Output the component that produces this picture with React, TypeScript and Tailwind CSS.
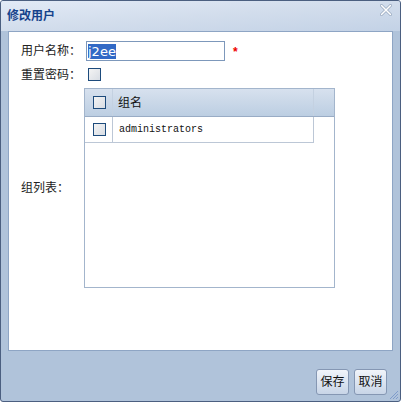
import React from "react";

const cjk = { fontFamily: '"Liberation Sans", "Noto Sans CJK SC", sans-serif' };

function Check() {
  return (
    <div className="w-[13px] h-[13px] border border-[#1d4b7c] bg-gradient-to-br from-[#f4f4f4] to-[#d8dde4]" />
  );
}

export default function App() {
  return (
    <div className="w-[401px] h-[402px] bg-white" style={cjk}>
      <div className="w-[401px] h-[402px] flex flex-col border border-[#4b5f80] rounded-[3px] bg-[#b0c3da] overflow-hidden">
        {/* title bar */}
        <div className="h-[30px] flex items-center justify-between pl-[6px] pr-[8px] bg-gradient-to-br from-[#e2eaf6] via-[#d2ddec] to-[#c3d2e6] shrink-0">
          <span className="text-[12px] font-bold text-[#15428b] leading-none -mt-[1px]">修改用户</span>
          <svg width="12" height="12" viewBox="0 0 12 12" className="-mt-[12px]">
            <path d="M1.5 1.5 L10.5 10.5 M10.5 1.5 L1.5 10.5" stroke="#9aaac0" strokeWidth="3" strokeLinecap="round" />
            <path d="M1.5 1.5 L10.5 10.5 M10.5 1.5 L1.5 10.5" stroke="#ffffff" strokeWidth="1.5" strokeLinecap="round" />
          </svg>
        </div>
        {/* body */}
        <div className="flex-1 flex flex-col pl-[7px] pr-[7px]">
          <div className="h-[320px] bg-white border border-[#8ea5c4] pl-[12px] pt-[9px] text-[12px] text-[#222]">
            <div className="flex items-center h-[20px]">
              <span className="w-[65px]">用户名称：</span>
              <div className="w-[139px] h-[20px] border border-[#7d98bb] flex items-center pl-[1px]">
                <span className="bg-[#3169c6] text-white text-[13px] leading-[15px]" style={{ fontFamily: '"DejaVu Sans", Verdana, sans-serif' }}>j2ee</span>
              </div>
              <span className="ml-[8px] text-[#ee0000] text-[12px] font-bold leading-none mt-[2px]">*</span>
            </div>
            <div className="flex items-center h-[13px] mt-[7px]">
              <span className="w-[67px]">重置密码：</span>
              <Check />
            </div>
            <div className="flex items-center mt-[7px]">
              <span className="w-[63px]">组列表：</span>
              <div className="w-[251px] h-[200px] border border-[#a3b5cc] flex flex-col">
                <div className="h-[28px] flex border-b border-[#99acc5] bg-gradient-to-b from-[#d7e1ee] to-[#bccee2] shrink-0">
                  <div className="w-[28px] flex items-center justify-center border-r border-[#c4d1e1] pl-[1px]">
                    <Check />
                  </div>
                  <div className="w-[201px] flex items-center pl-[5px] border-r border-[#c4d1e1] text-[12px] text-[#111]">组名</div>
                  <div className="flex-1" />
                </div>
                <div className="h-[26px] w-[229px] flex border-b border-r border-[#bcc7d6]">
                  <div className="w-[28px] flex items-center justify-center border-r border-[#bcc7d6] pl-[1px]">
                    <Check />
                  </div>
                  <div className="flex-1 flex items-center pl-[6px] text-[10px] text-[#111]" style={{ fontFamily: '"Liberation Mono", "DejaVu Sans Mono", monospace' }}>administrators</div>
                </div>
              </div>
            </div>
          </div>
          {/* footer */}
          <div className="flex-1 flex justify-end items-start pt-[18px] pr-[6px] gap-[5px] relative">
            <button className="w-[33px] h-[26px] rounded-[3px] border border-[#8597b3] bg-gradient-to-b from-[#f0f4fa] to-[#c8d5e7] text-[12px] text-[#111] flex items-center justify-center">保存</button>
            <button className="w-[33px] h-[26px] rounded-[3px] border border-[#8597b3] bg-gradient-to-b from-[#f0f4fa] to-[#c8d5e7] text-[12px] text-[#111] flex items-center justify-center">取消</button>
            <svg width="11" height="11" viewBox="0 0 11 11" className="absolute right-[-6px] bottom-[1px]">
              <path d="M10 2 L2 10 M10 5 L5 10 M10 8 L8 10" stroke="#7f9ccb" strokeWidth="1" />
            </svg>
          </div>
        </div>
      </div>
    </div>
  );
}
